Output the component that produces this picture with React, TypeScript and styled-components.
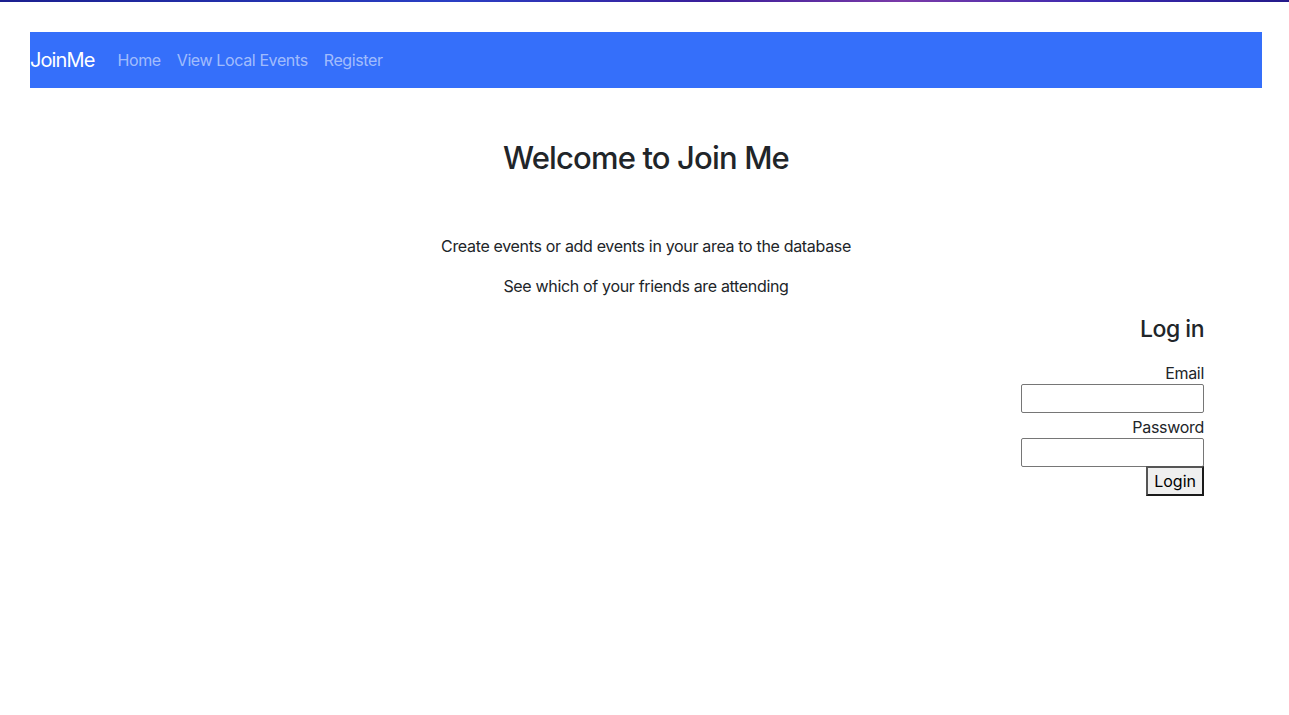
import styled, { createGlobalStyle } from 'styled-components'

const GlobalStyle = createGlobalStyle`
  body {
    margin: 0;
    font-family: Inter, "Noto Sans", "Liberation Sans", sans-serif;
    color: #212529;
    background: #fff;
  }
`

const TopGlow = styled.div`
  height: 2px;
  background: linear-gradient(90deg, #1b1f8f 0%, #2a3fc4 35%, #3a1e9a 55%, #7a3aa8 70%, #3b2ab0 85%, #241a8a 100%);
`

const Page = styled.div`
  padding: 30px 27px 0 30px;
`

const Navbar = styled.nav`
  display: flex;
  align-items: center;
  height: 56px;
  background: #356ffa;
`

const Brand = styled.a`
  font-size: 20px;
  color: #fff;
  margin-right: 15px;
  letter-spacing: -0.9px;
`

const NavLink = styled.a`
  font-size: 16px;
  color: rgba(255, 255, 255, 0.55);
  padding: 0 8px;
  letter-spacing: -0.38px;
`

const Hero = styled.section`
  text-align: center;
  padding-top: 51px;
`

const Title = styled.h1`
  margin: 0 0 58px;
  font-size: 31px;
  font-weight: 500;
  line-height: 1.2;
  letter-spacing: -0.85px;
`

const Lead = styled.p`
  margin: 0 0 16px;
  font-size: 16px;
  line-height: 24px;
  letter-spacing: -0.33px;
`

const LoginForm = styled.form`
  display: flex;
  flex-direction: column;
  align-items: flex-end;
  padding: 2px 58px 0 0;
`

const LoginTitle = styled.h2`
  margin: 0 0 18px;
  font-size: 23px;
  font-weight: 500;
  line-height: 1.2;
  letter-spacing: -0.5px;
`

const Label = styled.label`
  font-size: 16px;
  line-height: 22px;
  letter-spacing: -0.3px;
`

const Field = styled.input`
  box-sizing: border-box;
  width: 183px;
  height: 29px;
  border: 1px solid #767676;
  border-radius: 2px;
  margin: 0 0 3px;
`

const SubmitButton = styled.button`
  box-sizing: border-box;
  height: 30px;
  padding: 0 6px;
  margin-top: -4px;
  font-family: inherit;
  font-size: 16px;
  color: #000;
  background: #efefef;
  border: 2px solid #1a1a1a;
  border-top-color: #555;
  border-left-color: #555;
`

export default function App() {
  return (
    <>
      <GlobalStyle />
      <TopGlow />
      <Page>
        <Navbar>
          <Brand>JoinMe</Brand>
          <NavLink>Home</NavLink>
          <NavLink>View Local Events</NavLink>
          <NavLink>Register</NavLink>
        </Navbar>
        <Hero>
          <Title>Welcome to Join Me</Title>
          <Lead>Create events or add events in your area to the database</Lead>
          <Lead>See which of your friends are attending</Lead>
        </Hero>
        <LoginForm onSubmit={(e) => e.preventDefault()}>
          <LoginTitle>Log in</LoginTitle>
          <Label htmlFor="email">Email</Label>
          <Field id="email" type="email" />
          <Label htmlFor="password">Password</Label>
          <Field id="password" type="password" />
          <SubmitButton type="submit">Login</SubmitButton>
        </LoginForm>
      </Page>
    </>
  )
}
